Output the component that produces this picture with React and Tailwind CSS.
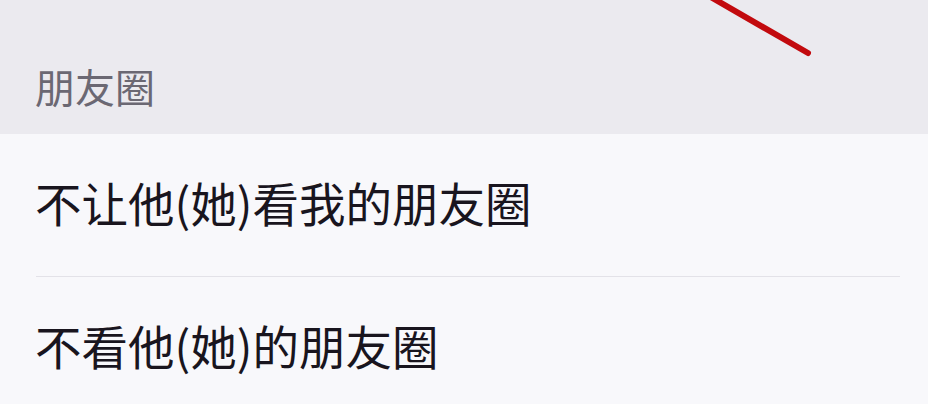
const rows = ['不让他(她)看我的朋友圈', '不看他(她)的朋友圈']

export default function App() {
  return (
    <div
      className="relative h-[404px] w-[928px] overflow-hidden bg-[#f8f8fb]"
      style={{ fontFamily: '"Noto Sans CJK SC", "Noto Sans", sans-serif' }}
    >
      <div className="flex h-[134px] items-end bg-[#ebeaef] px-[35px] pb-[24px]">
        <span className="text-[40px] leading-[48px] text-[#6b6873]">朋友圈</span>
      </div>

      <div className="flex flex-col">
        {rows.map((label, i) => (
          <div key={label} className="flex flex-col">
            <div className="flex h-[142px] items-center px-[35px] pb-[5px]">
              <span className="text-[46.5px] leading-none text-[#19151e]">{label}</span>
            </div>
            {i === 0 && <div className="ml-[36px] mr-[28px] h-px bg-[#e3e2e8]" />}
          </div>
        ))}
      </div>

      {/* red pen stroke */}
      <svg className="absolute left-0 top-0" width="928" height="80" viewBox="0 0 928 80">
        <line x1="709" y1="-4" x2="808" y2="53" stroke="#c20a0e" strokeWidth="6" strokeLinecap="round" />
      </svg>
    </div>
  )
}
